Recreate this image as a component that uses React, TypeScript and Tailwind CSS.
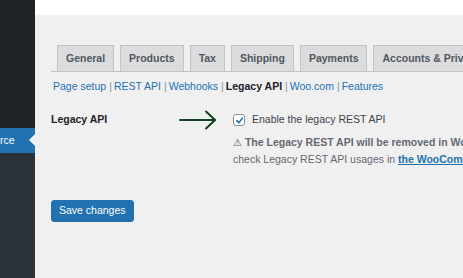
const tabs = ["General", "Products", "Tax", "Shipping", "Payments", "Accounts & Privacy"];

const subLinks = [
    { label: "Page setup", current: false },
    { label: "REST API", current: false },
    { label: "Webhooks", current: false },
    { label: "Legacy API", current: true },
    { label: "Woo.com", current: false },
    { label: "Features", current: false },
];

const App = () => {
    return (
        <div className="flex w-[463px] h-[278px] overflow-hidden bg-[#f0f0f1] font-['Liberation_Sans',Arial,sans-serif] text-[10.5px]">
            {/* admin sidebar */}
            <aside className="w-[35px] shrink-0 flex flex-col bg-[#1d2327]">
                <div className="h-[128px]" />
                <div className="relative h-[25px] bg-[#2271b1] flex items-center text-white text-[10.5px] leading-none">
                    <span>rce</span>
                    <span className="absolute right-0 top-[6px] w-0 h-0 border-y-[6px] border-y-transparent border-r-[6px] border-r-[#f0f0f1]" />
                </div>
                <div className="flex-1 bg-[#2c3338]" />
            </aside>

            <main className="flex-1 min-w-0 flex flex-col">
                <div className="h-[15px] bg-white shrink-0" />

                <div className="pl-[16px] pt-[30px]">
                    <nav className="flex gap-[6px] pl-[6px] border-b border-[#c3c4c7] whitespace-nowrap overflow-hidden">
                        {tabs.map((tab) => (
                            <div
                                key={tab}
                                className="h-[27px] -mb-px px-[8px] flex items-center bg-[#dcdcde] border border-[#c3c4c7] text-[10.5px] font-semibold text-[#50575e]"
                            >
                                {tab}
                            </div>
                        ))}
                    </nav>

                    <ul className="flex items-center mt-[8px] ml-[2px] h-[14px] whitespace-nowrap text-[10.5px] text-[#50575e]">
                        {subLinks.map((link, i) => (
                            <li key={link.label} className="flex items-center">
                                {i > 0 && <span className="ml-[3px] mr-[2px] text-[#8c8f94]">|</span>}
                                <span className={link.current ? "font-semibold text-[#1d2327]" : "text-[#2271b1]"}>
                                    {link.label}
                                </span>
                            </li>
                        ))}
                    </ul>

                    <div className="flex mt-[14px]">
                        <div className="w-[182px] shrink-0 h-[24px] flex items-center justify-between pr-[16px]">
                            <span className="font-semibold text-[#1d2327]">Legacy API</span>
                            <svg width="38" height="20" viewBox="0 0 38 20" fill="none" stroke="#0e4421" strokeWidth="2" strokeLinecap="round" strokeLinejoin="round">
                                <path d="M1 10 H36" />
                                <path d="M27 1.5 L36 10 L27 18.5" />
                            </svg>
                        </div>
                        <div className="min-w-0 flex-1 overflow-hidden">
                            <label className="h-[24px] flex items-center gap-[7px] text-[#3c434a]">
                                <span className="w-[12px] h-[12px] rounded-[3px] border border-[#8c8f94] bg-white flex items-center justify-center">
                                    <svg width="9" height="9" viewBox="0 0 10 10" fill="none" stroke="#2271b1" strokeWidth="1.8" strokeLinecap="round" strokeLinejoin="round">
                                        <path d="M2 5.2 L4.2 7.4 L8.2 2.6" />
                                    </svg>
                                </span>
                                <span>Enable the legacy REST API</span>
                            </label>
                            <div className="mt-[2px] text-[#646970] leading-[17px] whitespace-nowrap">
                                <div>
                                    <span className="font-['DejaVu_Sans',sans-serif] text-[10px]">⚠</span>{" "}
                                    <span className="font-semibold">The Legacy REST API will be removed in WooCommerce 9.0.</span>
                                </div>
                                <div>
                                    check Legacy REST API usages in{" "}
                                    <span className="font-semibold text-[#2271b1] underline">the WooCommerce log</span>.
                                </div>
                            </div>
                        </div>
                    </div>

                    <button className="mt-[32px] h-[22px] px-[7px] rounded-[3px] bg-[#2271b1] border border-[#2271b1] text-white text-[10.5px] font-medium">
                        Save changes
                    </button>
                </div>
            </main>
        </div>
    );
};

export default App;
